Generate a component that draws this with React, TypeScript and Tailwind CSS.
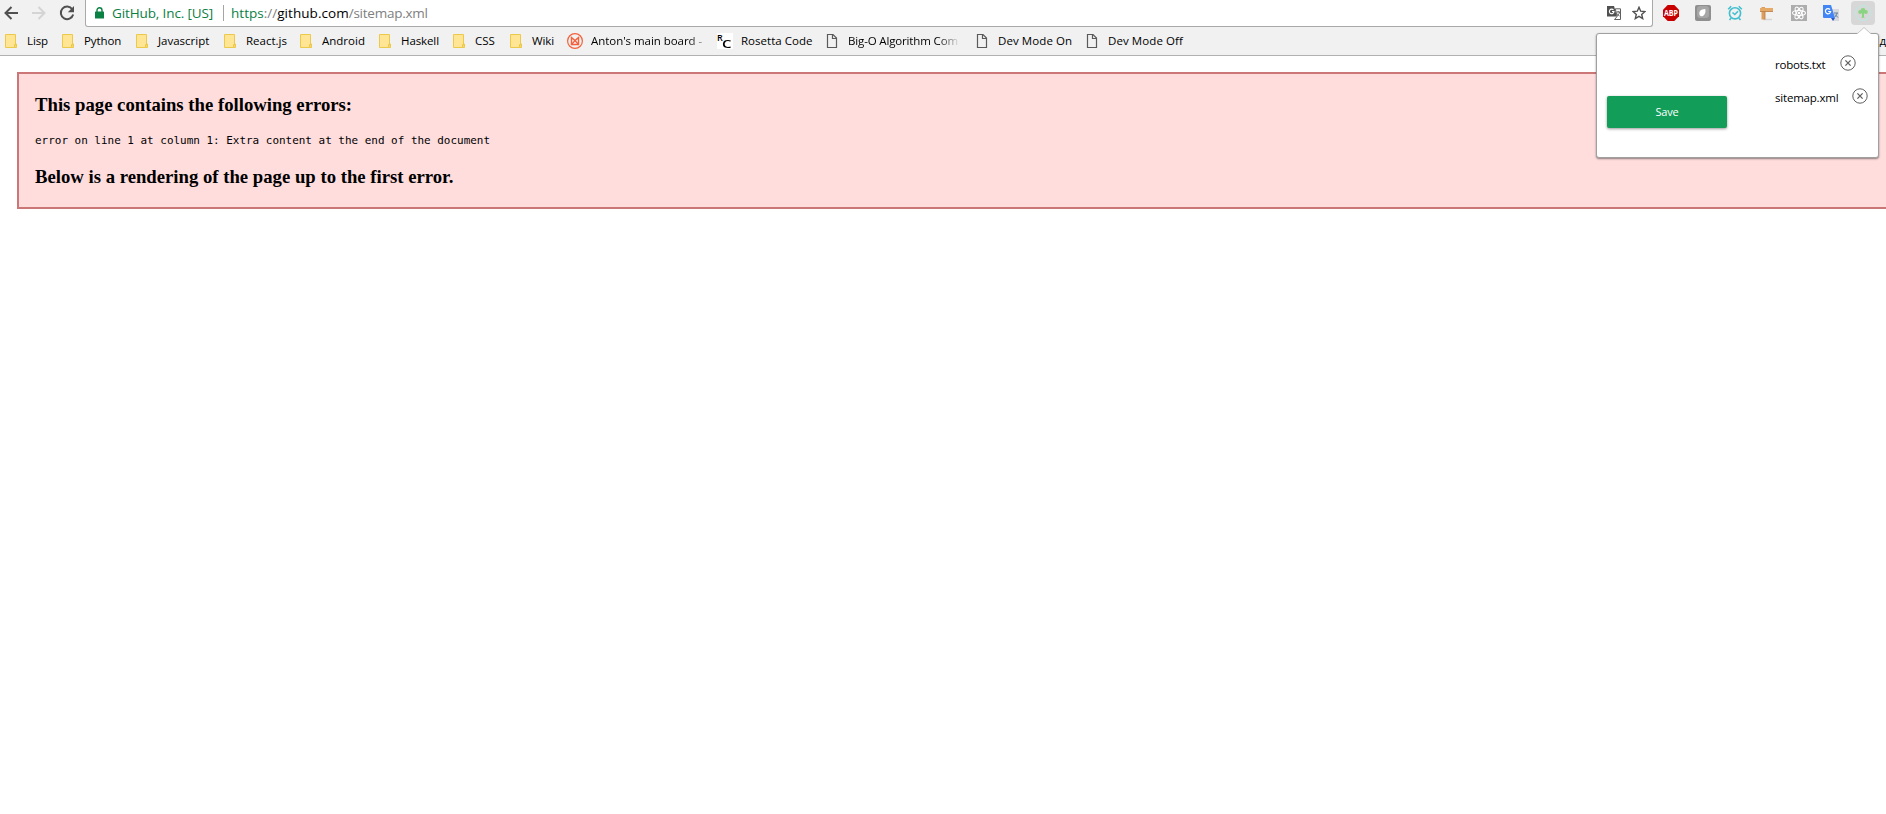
import type { ReactNode } from "react";

const Folder = () => (
  <svg width="14" height="16" viewBox="0 0 14 16" className="shrink-0">
    <path d="M1.5 1.5h10v9.5h1v3.5h-11z" fill="#ffe594" stroke="#ecc94b" />
    <path d="M10.5 11.5h1.5v3h-1.5z" fill="#ffe594" stroke="#ecc94b" />
  </svg>
);

const Doc = () => (
  <svg width="16" height="16" viewBox="0 0 16 16" className="shrink-0" fill="none" stroke="#5a5a5a" strokeWidth="1.2">
    <path d="M3.5 1.5h5.5l3.5 3.5v9.5h-9z" />
    <path d="M8.5 1.5v4h4" />
  </svg>
);

const Board = () => (
  <svg width="16" height="16" viewBox="0 0 16 16" className="shrink-0" fill="none" stroke="#f4603a" strokeWidth="1.2">
    <circle cx="8" cy="8" r="7.4" />
    <path d="M4.5 11.5v-7l3.5 3 3.5-3v7z" strokeWidth="1.4" />
    <path d="M5 11l3-3.5 3 3.5" />
  </svg>
);

const Rosetta = () => (
  <span className="relative block h-4 w-4 shrink-0 bg-white text-black">
    <span className="absolute left-0 top-0 text-[9px] font-semibold leading-[9px]">R</span>
    <span className="absolute left-[5px] top-[7px] origin-left scale-x-150 text-[10px] font-semibold leading-[9px]">C</span>
  </span>
);

type Mark = { label: string; icon: ReactNode; box: string; text: string };

const folderText = "ml-[9px] tracking-[-0.1px]";
const marks: Mark[] = [
  { label: "Lisp", icon: <Folder />, box: "w-[57px]", text: folderText },
  { label: "Python", icon: <Folder />, box: "w-[74px]", text: folderText },
  { label: "Javascript", icon: <Folder />, box: "w-[88px]", text: "ml-[9px]" },
  { label: "React.js", icon: <Folder />, box: "w-[76px]", text: "ml-[9px]" },
  { label: "Android", icon: <Folder />, box: "w-[79px]", text: "ml-[9px]" },
  { label: "Haskell", icon: <Folder />, box: "w-[74px]", text: folderText },
  { label: "CSS", icon: <Folder />, box: "w-[57px]", text: "ml-[9px]" },
  { label: "Wiki", icon: <Folder />, box: "w-[58px]", text: folderText },
  {
    label: "Anton's main board -",
    icon: <Board />,
    box: "w-[150px]",
    text: "ml-[8px] tracking-[-0.05px] [mask-image:linear-gradient(to_right,black_88%,rgba(0,0,0,0.4))]",
  },
  { label: "Rosetta Code", icon: <Rosetta />, box: "w-[107px]", text: "ml-[8px] tracking-[0.02px]" },
  {
    label: "Big-O Algorithm Com",
    icon: <Doc />,
    box: "w-[150px]",
    text: "ml-[8px] tracking-[-0.15px] [mask-image:linear-gradient(to_right,black_82%,rgba(0,0,0,0.1))]",
  },
  { label: "Dev Mode On", icon: <Doc />, box: "w-[110px]", text: "ml-[8px] tracking-[0.08px]" },
  { label: "Dev Mode Off", icon: <Doc />, box: "w-[110px]", text: "ml-[8px] tracking-[0.08px]" },
];

const CloseIcon = () => (
  <svg width="16" height="16" viewBox="0 0 16 16" fill="none" stroke="#606060">
    <circle cx="8" cy="8" r="7.2" />
    <path d="M5.4 5.4l5.2 5.2M10.6 5.4l-5.2 5.2" strokeWidth="1.3" />
  </svg>
);

const Toolbar = () => (
  <div className="flex h-[27px] items-start">
    <div className="flex h-[26px] w-[85px] items-center pl-1">
      <svg width="14" height="14" viewBox="0 0 14 14" fill="none" stroke="#505050" strokeWidth="2">
        <path d="M14 7H1.5M7.5 1L1.5 7l6 6" />
      </svg>
      <svg width="14" height="14" viewBox="0 0 14 14" fill="none" stroke="#d4d4d4" strokeWidth="2" className="ml-[14px]">
        <path d="M0 7h12.5M6.5 1l6 6-6 6" />
      </svg>
      <svg width="16" height="16" viewBox="0 0 16 16" fill="none" stroke="#505050" strokeWidth="2" className="ml-[13px]">
        <path d="M13.3 4.2A6.3 6.3 0 1 0 14.2 9.5" />
        <path d="M15 1v6.2H8.8z" fill="#505050" stroke="none" />
      </svg>
    </div>
    <div className="flex h-[27px] w-[1568px] items-center rounded-b-[3px] border border-t-0 border-[#a9a9a9] bg-white pl-[9px] text-[13.5px]">
      <svg width="9" height="12" viewBox="0 0 9 12">
        <path d="M2 5V3.2a2.5 2.5 0 0 1 5 0V5" fill="none" stroke="#0b8043" strokeWidth="1.4" />
        <rect x="0" y="4.5" width="9" height="7" rx="0.6" fill="#0b8043" />
      </svg>
      <span className="ml-[8px] w-[111px] whitespace-nowrap tracking-[-0.12px] text-[#0b8043]">GitHub, Inc. [US]</span>
      <span className="h-4 w-px bg-[#a5a5a5]" />
      <span className="ml-[7px] flex-1 whitespace-nowrap tracking-[-0.25px] text-[#808080]">
        <span className="tracking-[0.02px]">
          <span className="text-[#0b8043]">https</span>://
        </span>
        <span className="tracking-[0.05px] text-black">github.com</span>/sitemap.xml
      </span>
      <svg width="14" height="14" viewBox="0 0 14 14" className="mr-[11px]">
        <path d="M0 0h7l3 10.500H0z" fill="#505050" />
        <path d="M8.300 2.800h5.200v10.700H7.500l2.600-3z" fill="#fff" stroke="#606060" />
        <path d="M6.500 4A2.300 2.300 0 1 0 7 5.500H5" fill="none" stroke="#fff" strokeWidth="1.100" />
        <path d="M9.500 6h3.500M11.200 5v1M12.500 6c0 2-1.500 3-2.300 3.600M10 7.500l2.500 2.800" fill="none" stroke="#606060" />
      </svg>
      <svg width="14" height="14" viewBox="0 0 14 14" fill="none" stroke="#505050" strokeWidth="1.400" className="mr-[6px]">
        <path d="M7 1.300l1.700 3.900 4.200.4-3.200 2.800 1 4.200L7 10.400l-3.700 2.200 1-4.200L1.100 5.600l4.200-.4z" />
      </svg>
    </div>
    <div className="flex h-[26px] flex-1 items-center pl-[10px]">
      <svg width="16" height="16" viewBox="0 0 16 16">
        <path d="M4.700 0h6.600L16 4.700v6.600L11.300 16H4.700L0 11.300V4.700z" fill="#c80000" />
        <text x="8" y="11" textAnchor="middle" fontSize="8.500" fontWeight="700" fill="#fff" textLength="14" lengthAdjust="spacingAndGlyphs">ABP</text>
      </svg>
      <svg width="16" height="16" viewBox="0 0 16 16" className="ml-4">
        <rect width="16" height="16" rx="2" fill="#8f8f8f" />
        <rect x="2" y="1" width="12" height="12" rx="3" fill="#a6a6a6" />
        <path d="M10.300 4c.7 3-.5 6.800-3.300 7.300C4.500 11.300 4 9 4.500 7S7.500 4 10.300 4z" fill="#fff" />
      </svg>
      <svg width="16" height="16" viewBox="0 0 16 16" className="ml-4" fill="none" stroke="#42bfcf" strokeWidth="1.600">
        <circle cx="8" cy="8.300" r="5.600" />
        <path d="M5.500 7.500l2.300 2L11 6.300M1.200 4.300l3-3M14.800 4.300l-3-3M4.200 13l-1.700 2M11.800 13l1.700 2" />
      </svg>
      <svg width="16" height="16" viewBox="0 0 16 16" className="ml-4">
        <path d="M4 14.500h9" stroke="#d5d5d5" strokeWidth="1.500" />
        <path d="M2.500 2h3.500v12.500H2.500z" fill="#dd9d5c" />
        <path d="M1 3h13v3.500H1z" fill="#e5a968" />
        <path d="M1 6.500h13M6 6.500v8" stroke="#b87a41" strokeWidth=".8" />
      </svg>
      <svg width="16" height="16" viewBox="0 0 16 16" className="ml-4">
        <rect width="16" height="16" fill="#adadad" />
        <g fill="none" stroke="#fff" strokeWidth="1.100">
          <ellipse cx="8" cy="8" rx="6.500" ry="2.500" />
          <ellipse cx="8" cy="8" rx="6.500" ry="2.500" transform="rotate(60 8 8)" />
          <ellipse cx="8" cy="8" rx="6.500" ry="2.500" transform="rotate(120 8 8)" />
        </g>
        <circle cx="8" cy="8" r="1.300" fill="#fff" />
      </svg>
      <svg width="16" height="16" viewBox="0 0 16 16" className="ml-4">
        <path d="M7 4h9v12h-6z" fill="#d7d9dc" />
        <path d="M0 0h8l4 13H1a1 1 0 0 1-1-1z" fill="#4285f4" />
        <path d="M8 13h4l-2 3z" fill="#2a56c6" />
        <path d="M7 4.500A2.600 2.600 0 1 0 7.600 6.500H5.200" fill="none" stroke="#fff" strokeWidth="1.200" />
        <path d="M11 8h4M14 8c0 2-1.500 3-2 4M12 9.500l3 3" stroke="#607d9c" fill="none" />
      </svg>
      <div className="ml-[12px] flex h-6 w-6 items-center justify-center rounded-sm bg-[#d7d7d7]">
        <svg width="16" height="16" viewBox="0 0 16 16">
          <circle cx="8" cy="8" r="7.500" fill="none" stroke="#bfe8e2" />
          <path d="M7 7h2v5l1 .8H6L7 12z" fill="#8ad482" />
          <circle cx="8" cy="5.300" r="2.300" fill="#8ad482" />
          <circle cx="5.200" cy="7" r="2" fill="#8ad482" />
          <circle cx="10.800" cy="7" r="2" fill="#8ad482" />
        </svg>
      </div>
    </div>
  </div>
);

const Popup = () => (
  <div className="absolute left-[1596px] top-[33px] h-[125px] w-[283px] rounded-[3px] border border-[#a0a0a0] bg-white text-[11.5px] shadow-[0_1px_2px_rgba(0,0,0,0.45)]">
    <svg width="14" height="7" viewBox="0 0 14 7" className="absolute left-[260px] top-[-7px]">
      <path d="M0 7l7-6.500L14 7z" fill="#fff" />
      <path d="M.5 6.500L7 .5l6.500 6" fill="none" stroke="#c4c4c4" />
    </svg>
    <div className="flex">
      <button className="ml-[10px] mt-[62px] h-8 w-[120px] rounded-[2px] bg-[#129d58] text-[11px] tracking-[-0.2px] text-white shadow-[0_1px_3px_rgba(0,0,0,0.4)]">
        Save
      </button>
      <div className="ml-[48px] mt-[21px] flex flex-col gap-[17px] tracking-[-0.2px]">
        <div className="flex h-4 items-start">
          <span className="w-[65px] pt-[2px] leading-4">robots.txt</span>
          <CloseIcon />
        </div>
        <div className="flex h-4 items-start">
          <span className="w-[77px] pt-[2px] leading-4">sitemap.xml</span>
          <CloseIcon />
        </div>
      </div>
    </div>
  </div>
);

export default function App() {
  return (
    <div className="relative h-[814px] w-[1886px] overflow-hidden bg-white font-['Open_Sans','Noto_Sans',sans-serif] text-black">
      <header className="h-14 border-b border-[#b1b1b1] bg-[#f1f1f1]">
        <Toolbar />
        <nav className="flex h-7 items-center pl-1 text-[11.5px]">
          {marks.map((m) => (
            <div key={m.label} className={`flex shrink-0 items-center ${m.box}`}>
              {m.icon}
              <span className={`whitespace-nowrap leading-4 ${m.text}`}>{m.label}</span>
            </div>
          ))}
          <span className="ml-auto">д</span>
        </nav>
      </header>
      <main className="ml-[17px] mt-4 h-[137px] w-[1900px] border-2 border-[#cc7777] bg-[#ffdddd] pl-4">
        <h3 className="pt-5 font-['Liberation_Serif',serif] text-[18.72px] font-bold leading-[22px]">
          This page contains the following errors:
        </h3>
        <div className="mt-[18px] font-['DejaVu_Sans_Mono',monospace] text-[10.96px] leading-[14px]">
          error on line 1 at column 1: Extra content at the end of the document
        </div>
        <h3 className="mt-[18px] font-['Liberation_Serif',serif] text-[18.72px] font-bold leading-[22px]">
          Below is a rendering of the page up to the first error.
        </h3>
      </main>
      <Popup />
    </div>
  );
}
